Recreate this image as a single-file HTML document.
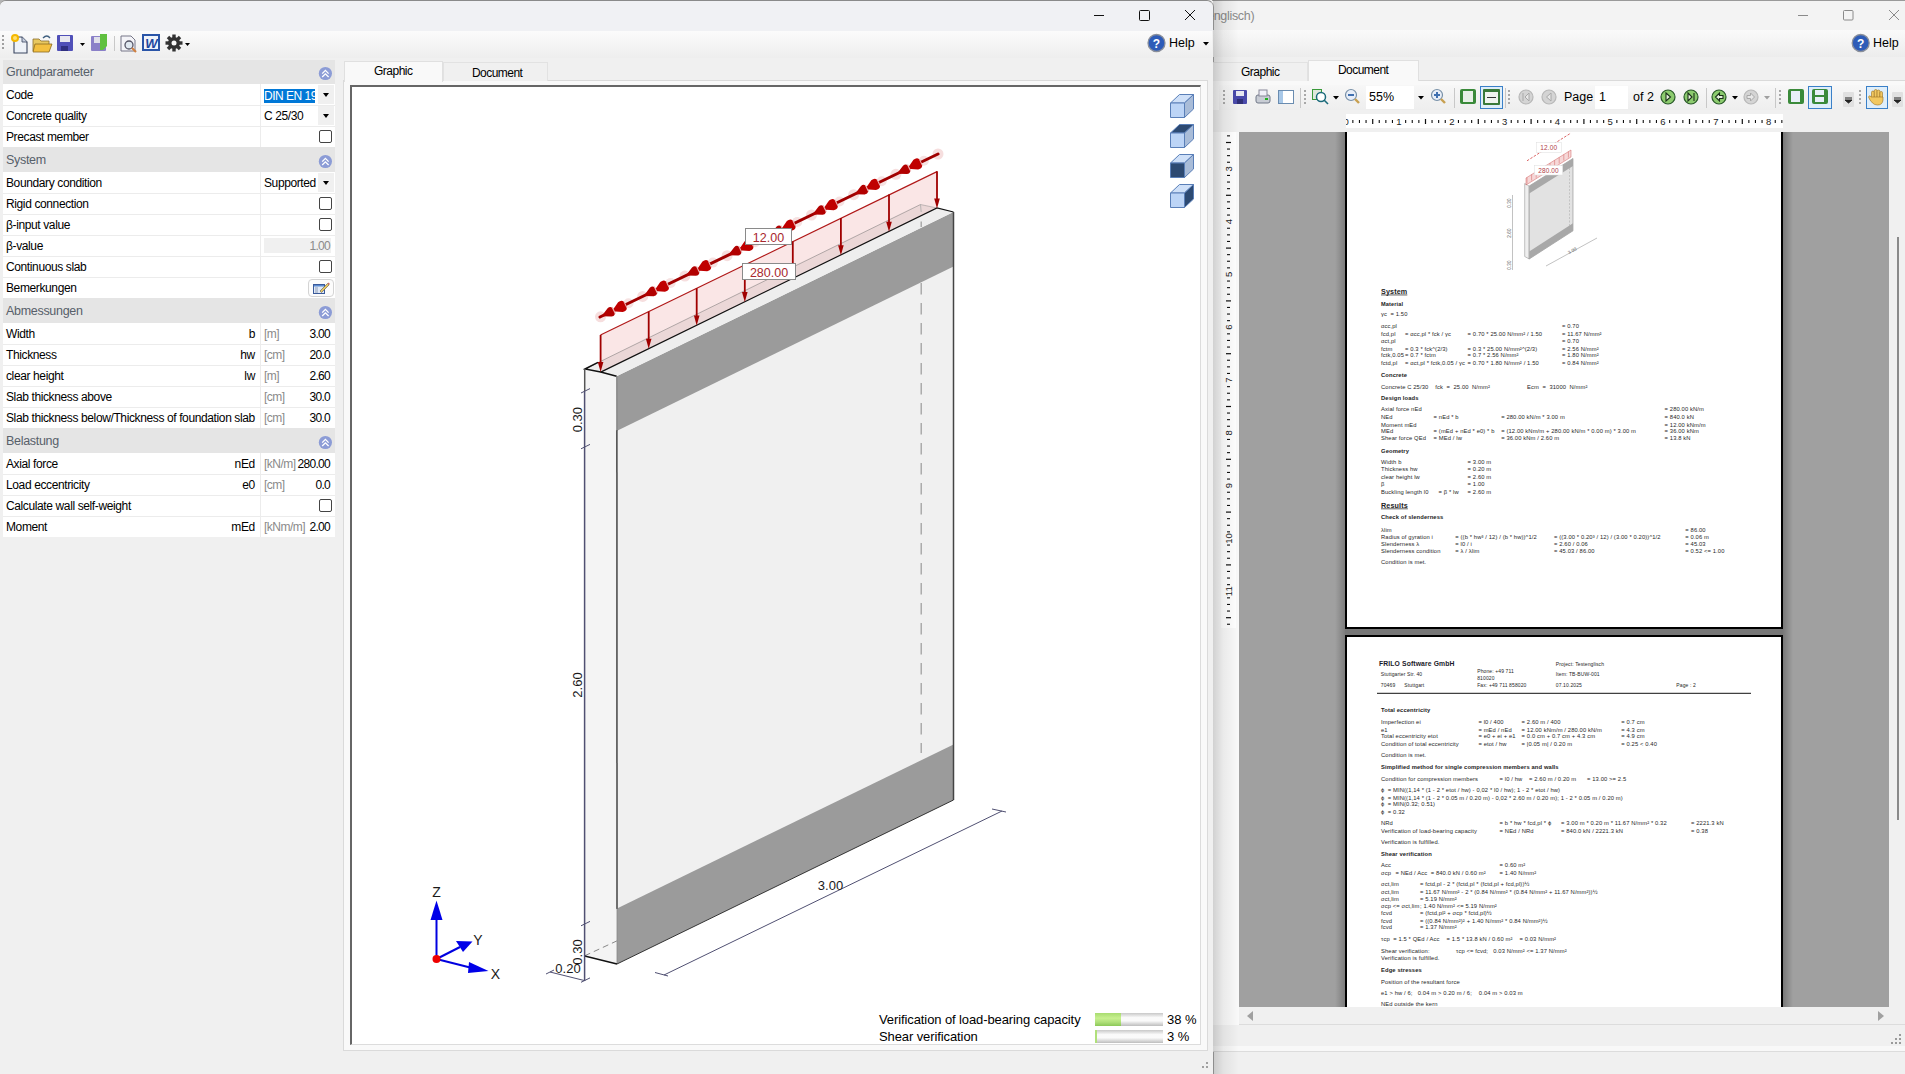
<!DOCTYPE html><html><head><meta charset="utf-8"><style>
*{margin:0;padding:0;box-sizing:border-box}
html,body{width:1905px;height:1074px;overflow:hidden;background:#f0f0f0;font-family:"Liberation Sans",sans-serif;font-size:12px;color:#000}
.a{position:absolute}
.t{position:absolute;white-space:nowrap;line-height:1}
.hdr{position:absolute;left:3px;width:332px;height:25px;background:#e5e5e5;}
.hdr span{position:absolute;left:3px;top:7px;font-size:12.5px;color:#57606a;line-height:1;letter-spacing:-0.3px}
.row{position:absolute;left:3px;width:332px;height:21px;background:#fff}
.row:before{content:"";position:absolute;left:0;top:0;width:332px;height:1px;background:#ececec}
.row.f:before{display:none}
.row .l{position:absolute;left:3px;top:5px;line-height:1;white-space:nowrap;letter-spacing:-0.38px}
.row .s{position:absolute;right:80px;top:5px;line-height:1;letter-spacing:-0.3px}
.row .sep{position:absolute;left:257px;top:0;width:1px;height:21px;background:#ececec}
.row .u{position:absolute;left:261px;top:5px;color:#8a8a8a;line-height:1;white-space:nowrap;letter-spacing:-0.5px}
.row .v{position:absolute;right:5px;top:5px;line-height:1;letter-spacing:-0.7px}
.cb{position:absolute;left:316px;top:4px;width:13px;height:13px;border:1px solid #444;border-radius:2px;background:#fff}
.dd{position:absolute;left:315px;top:1px;width:16px;height:19px;background:#f0f0f0}
.dd:after{content:"";position:absolute;left:5px;top:8px;border-left:3px solid transparent;border-right:3px solid transparent;border-top:4px solid #000}
</style></head><body>
<div class="a" style="left:1212px;top:0;width:693px;height:1074px;background:#f0f0f0;border-top:1px solid #9a9a9a"></div>
<div class="a" style="left:0;top:0;width:10px;height:10px;background:#b4b4b4"></div>
<div class="a" style="left:1212px;top:1px;width:693px;height:29px;background:#f3f3f3"></div>
<div class="a" style="left:0;top:0;width:1214px;height:1074px;background:#f0f0f0;border-top:1px solid #8a8a8a;border-right:1px solid #a8a8a8;border-top-right-radius:7px;border-top-left-radius:6px;overflow:hidden">
<div class="a" style="left:0;top:0;width:1213px;height:30px;background:#f0f1f4;border-top-left-radius:6px;border-top-right-radius:7px"></div>
<div class="a" style="left:0;top:30px;width:1212px;height:27px;background:linear-gradient(#fbfbfb,#f3f3f3 60%,#eeeeee)"></div>
</div>
<div class="hdr" style="top:60px;height:24px"><span style="top:6px">Grundparameter</span><svg class="a" style="left:315px;top:6px" width="15" height="15" viewBox="0 0 15 15"><circle cx="7.4" cy="7.5" r="6.6" fill="#8c9cd6"/><path d="M4.2 7.6 L7.4 4.4 L10.6 7.6 M4.2 11 L7.4 7.8 L10.6 11" stroke="#fff" stroke-width="1.3" fill="none"/></svg></div>
<div class="row f" style="top:84px"><span class="l">Code</span><div class="sep"></div><div class="a" style="left:261px;top:5px;width:51px;height:14px;background:#0078d7;overflow:hidden"><span class="t" style="left:0;top:1px;color:#fff;letter-spacing:-0.5px">DIN EN 19</span></div><div class="dd"></div></div>
<div class="row" style="top:105px"><span class="l">Concrete quality</span><div class="sep"></div><span class="t" style="left:261px;top:5px;letter-spacing:-0.4px">C 25/30</span><div class="dd"></div></div>
<div class="row" style="top:126px"><span class="l">Precast member</span><div class="sep"></div><div class="cb"></div></div>
<div class="hdr" style="top:147px"><span style="top:7px">System</span><svg class="a" style="left:315px;top:7px" width="15" height="15" viewBox="0 0 15 15"><circle cx="7.4" cy="7.5" r="6.6" fill="#8c9cd6"/><path d="M4.2 7.6 L7.4 4.4 L10.6 7.6 M4.2 11 L7.4 7.8 L10.6 11" stroke="#fff" stroke-width="1.3" fill="none"/></svg></div>
<div class="row f" style="top:172px"><span class="l">Boundary condition</span><div class="sep"></div><span class="t" style="left:261px;top:5px;letter-spacing:-0.4px">Supported</span><div class="dd"></div></div>
<div class="row" style="top:193px"><span class="l">Rigid connection</span><div class="sep"></div><div class="cb"></div></div>
<div class="row" style="top:214px"><span class="l">β-input value</span><div class="sep"></div><div class="cb"></div></div>
<div class="row" style="top:235px"><span class="l">β-value</span><div class="sep"></div><div class="a" style="left:261px;top:3px;width:67px;height:15px;background:#f0f0f0"></div><span class="v" style="color:#8a8a8a">1.00</span></div>
<div class="row" style="top:256px"><span class="l">Continuous slab</span><div class="sep"></div><div class="cb"></div></div>
<div class="row" style="top:277px"><span class="l">Bemerkungen</span><div class="sep"></div><div class="a" style="left:305px;top:2px;width:26px;height:18px;border:1px solid #d4d4d4;border-radius:4px;background:#fcfcfc"></div><svg class="a" style="left:310px;top:4px" width="18" height="14" viewBox="0 0 18 14"><rect x="0.5" y="3.5" width="11" height="9" fill="#dfe8f6" stroke="#3a5a9a"/><rect x="1" y="4" width="10" height="1.5" fill="#5a8ad0"/><path d="M2 7h3M2 9h3M2 11h3" stroke="#7a8aa8" stroke-width=".8"/><path d="M7 10 L14.5 2.5 L16 4 L8.5 11.5 Z" fill="#e8c860" stroke="#555" stroke-width=".6"/><path d="M14.5 2.5 L15.5 1.5 L17 3 L16 4Z" fill="#d07060"/></svg></div>
<div class="hdr" style="top:298px"><span style="top:7px">Abmessungen</span><svg class="a" style="left:315px;top:7px" width="15" height="15" viewBox="0 0 15 15"><circle cx="7.4" cy="7.5" r="6.6" fill="#8c9cd6"/><path d="M4.2 7.6 L7.4 4.4 L10.6 7.6 M4.2 11 L7.4 7.8 L10.6 11" stroke="#fff" stroke-width="1.3" fill="none"/></svg></div>
<div class="row f" style="top:323px"><span class="l">Width</span><div class="sep"></div><span class="s">b</span><span class="u">[m]</span><span class="v">3.00</span></div>
<div class="row" style="top:344px"><span class="l">Thickness</span><div class="sep"></div><span class="s">hw</span><span class="u">[cm]</span><span class="v">20.0</span></div>
<div class="row" style="top:365px"><span class="l">clear height</span><div class="sep"></div><span class="s">lw</span><span class="u">[m]</span><span class="v">2.60</span></div>
<div class="row" style="top:386px"><span class="l">Slab thickness above</span><div class="sep"></div><span class="u">[cm]</span><span class="v">30.0</span></div>
<div class="row" style="top:407px"><span class="l">Slab thickness below/Thickness of foundation slab</span><div class="sep"></div><span class="u">[cm]</span><span class="v">30.0</span></div>
<div class="hdr" style="top:428px"><span style="top:7px">Belastung</span><svg class="a" style="left:315px;top:7px" width="15" height="15" viewBox="0 0 15 15"><circle cx="7.4" cy="7.5" r="6.6" fill="#8c9cd6"/><path d="M4.2 7.6 L7.4 4.4 L10.6 7.6 M4.2 11 L7.4 7.8 L10.6 11" stroke="#fff" stroke-width="1.3" fill="none"/></svg></div>
<div class="row f" style="top:453px"><span class="l">Axial force</span><div class="sep"></div><span class="s">nEd</span><span class="u">[kN/m]</span><span class="v">280.00</span></div>
<div class="row" style="top:474px"><span class="l">Load eccentricity</span><div class="sep"></div><span class="s">e0</span><span class="u">[cm]</span><span class="v">0.0</span></div>
<div class="row" style="top:495px"><span class="l">Calculate wall self-weight</span><div class="sep"></div><div class="cb"></div></div>
<div class="row" style="top:516px"><span class="l">Moment</span><div class="sep"></div><span class="s">mEd</span><span class="u">[kNm/m]</span><span class="v">2.00</span></div>
<svg class="a" style="left:0;top:0" width="1213" height="60">
<g stroke="#111" stroke-width="1" fill="none">
 <line x1="1094" y1="15.5" x2="1104" y2="15.5"/>
 <rect x="1139.5" y="10.5" width="10" height="10" rx="1"/>
 <path d="M1185 10 L1195 20 M1195 10 L1185 20"/>
</g>
<!-- grip -->
<g fill="#a0a0a0"><rect x="2" y="35" width="2" height="2"/><rect x="2" y="39" width="2" height="2"/><rect x="2" y="43" width="2" height="2"/><rect x="2" y="47" width="2" height="2"/></g>
<!-- new doc -->
<path d="M14 37 h8 l5 5 v11 h-13 z" fill="#eef2f8" stroke="#3a4660" stroke-width="1.1"/><path d="M22 37 v5 h5" fill="#c8d0e0" stroke="#3a4660" stroke-width=".8"/>
<circle cx="15" cy="38" r="4" fill="#f5b800"/><circle cx="15" cy="38" r="2" fill="#ffe070"/>
<!-- open folder -->
<path d="M33 39 h6 l2 2 h8 v10 h-16 z" fill="#e8c860" stroke="#8a7030" stroke-width=".8"/>
<path d="M35 44 h17 l-3 8 h-16 z" fill="#f3c040" stroke="#8a6a20" stroke-width=".8"/>
<path d="M43 38 q4 -4 7 0" stroke="#406080" stroke-width="1.3" fill="none"/>
<!-- save -->
<rect x="57" y="35" width="16" height="16" fill="#5050b8" rx="1"/><rect x="60" y="36" width="10" height="6" fill="#e8e8f0"/><rect x="61" y="46" width="7" height="5" fill="#303080"/>
<path d="M80 43 h5 l-2.5 3 z" fill="#000"/>
<!-- save green -->
<rect x="91" y="36" width="15" height="15" fill="#8a80c8" rx="1"/><rect x="94" y="37" width="7" height="6" fill="#e0e0ea"/>
<path d="M100 34 h7 v12 l-4 4 h-3 z" fill="#60c040"/>
<line x1="114.5" y1="36" x2="114.5" y2="51" stroke="#c8c8c8"/>
<!-- print preview -->
<path d="M121 36 h10 l4 4 v11 h-14 z" fill="#f4f4f8" stroke="#778" stroke-width="1"/>
<circle cx="129" cy="45" r="4" fill="#e0e8f0" stroke="#556" stroke-width="1.3"/><line x1="132" y1="48" x2="136" y2="52" stroke="#d08040" stroke-width="2.2"/>
<!-- word -->
<rect x="142" y="34" width="18" height="17" fill="#2a55a8"/><rect x="144" y="36" width="14" height="13" fill="#f0f4fa"/>
<text x="151" y="48" font-family="Liberation Sans" font-weight="bold" font-style="italic" font-size="13" fill="#1e48a0" text-anchor="middle" letter-spacing="-1">W</text>
<!-- gear -->
<g transform="translate(174,43)"><circle r="6" fill="#333"/><g fill="#333"><rect x="-1.7" y="-8.5" width="3.4" height="17"/><rect x="-1.7" y="-8.5" width="3.4" height="17" transform="rotate(45)"/><rect x="-1.7" y="-8.5" width="3.4" height="17" transform="rotate(90)"/><rect x="-1.7" y="-8.5" width="3.4" height="17" transform="rotate(135)"/></g><circle r="2.5" fill="#fafafa"/></g>
<path d="M185 43 h5 l-2.5 3 z" fill="#000"/>
<!-- help -->
<circle cx="1156.5" cy="43" r="8.5" fill="#2e5cb8" stroke="#8a8f9a" stroke-width="1.3"/>
<text x="1156.5" y="47.5" font-family="Liberation Sans" font-weight="bold" font-size="12" fill="#fff" text-anchor="middle">?</text>
<path d="M1203 42 h6 l-3 3.5 z" fill="#000"/>
</svg>
<span class="t" style="left:1169px;top:37px;font-size:12.5px">Help</span>
<div class="a" style="left:343px;top:80px;width:865px;height:971px;background:#f9f9f9;border:1px solid #dadada"></div>
<div class="a" style="left:344px;top:61px;width:99px;height:21px;background:#f9f9f9;border:1px solid #e0e0e0;border-bottom:none"></div>
<span class="t" style="left:374px;top:65px;letter-spacing:-0.5px">Graphic</span>
<div class="a" style="left:443px;top:62px;width:105px;height:19px;background:#f0f0f0;border:1px solid #e2e2e2;border-bottom:none"></div>
<span class="t" style="left:472px;top:67px;letter-spacing:-0.55px">Document</span>
<div class="a" style="left:350px;top:85px;width:851px;height:960px;background:#fff;border-top:2px solid #666;border-left:2px solid #666;border-right:1px solid #dcdcdc;border-bottom:1px solid #dcdcdc"></div>
<svg class="a" style="left:0;top:0" width="1213" height="1074">
<polygon points="585,369 616.6,376.3 617,964 584.7,956" fill="#f4f4f4"/>
<polygon points="616.6,376.3 953.5,212 953.5,800 617,964" fill="#f0f0f0"/>
<polygon points="616.6,376.3 953.5,212 953.5,266.5 616.6,431" fill="#9b9b9b"/>
<polygon points="617,908.5 953.5,744.5 953.5,800 617,964" fill="#9b9b9b"/>
<polygon points="585,369 920.5,204.5 953.5,212 616.6,376.3" fill="#eeeeee"/>
<line x1="921.2" y1="221.5" x2="921.2" y2="227" stroke="#a0a0a0" stroke-width="1.3"/>
<line x1="921.2" y1="283" x2="921.2" y2="753" stroke="#a0a0a0" stroke-width="1.3" stroke-dasharray="11.5 8.5"/>
<line x1="584.7" y1="955.8" x2="616.9" y2="940.9" stroke="#888" stroke-width="1" stroke-dasharray="6 4"/>
<polygon points="600.5,335 937,171.6 937,208 600.7,372.1" fill="rgba(215,60,60,0.13)"/>
<line x1="600.5" y1="335" x2="937" y2="171.6" stroke="#b01818" stroke-width="1.2"/>
<line x1="585" y1="369" x2="920.5" y2="204.5" stroke="#6a6a6a" stroke-width="0.8" opacity="0.6"/>
<line x1="920.5" y1="204.5" x2="937" y2="208" stroke="#888" stroke-width="0.8" opacity="0.6"/>
<line x1="920.5" y1="204.5" x2="921.2" y2="212" stroke="#aaa" stroke-width="0.8"/>
<polyline points="598,362.3 585,369 600.7,372.1 616.6,376.3" fill="none" stroke="#111" stroke-width="1.5"/>
<polyline points="600.7,372.1 937,208 953.5,212" fill="none" stroke="#111" stroke-width="1.2"/>
<line x1="616.9" y1="430" x2="617" y2="909" stroke="#444" stroke-width="1.5"/>
<line x1="616.8" y1="376.3" x2="616.9" y2="431" stroke="#777" stroke-width="1"/>
<line x1="617" y1="908" x2="617" y2="964" stroke="#888" stroke-width="0.8"/>
<line x1="953.5" y1="212" x2="953.5" y2="800" stroke="#444" stroke-width="1.5"/>
<polyline points="584.7,956 617,964" fill="none" stroke="#111" stroke-width="1.3"/>
<line x1="617" y1="964" x2="953.5" y2="800" stroke="#222" stroke-width="0.9"/>
<line x1="584.7" y1="369" x2="584.7" y2="391" stroke="#555" stroke-width="1.5"/>
<line x1="600.6" y1="335.0" x2="600.6" y2="366.1" stroke="#a00000" stroke-width="1.8"/>
<polygon points="597.8,362.1 603.4,362.1 600.6,372.1" fill="#a00000"/>
<line x1="648.7" y1="311.6" x2="648.7" y2="342.8" stroke="#a00000" stroke-width="1.8"/>
<polygon points="645.9,338.8 651.5,338.8 648.7,348.8" fill="#a00000"/>
<line x1="696.7" y1="288.2" x2="696.7" y2="319.4" stroke="#a00000" stroke-width="1.8"/>
<polygon points="693.9,315.4 699.5,315.4 696.7,325.4" fill="#a00000"/>
<line x1="744.8" y1="264.8" x2="744.8" y2="296.0" stroke="#a00000" stroke-width="1.8"/>
<polygon points="742.0,292.0 747.6,292.0 744.8,302.0" fill="#a00000"/>
<line x1="792.8" y1="241.4" x2="792.8" y2="272.6" stroke="#a00000" stroke-width="1.8"/>
<polygon points="790.0,268.6 795.6,268.6 792.8,278.6" fill="#a00000"/>
<line x1="840.9" y1="218.0" x2="840.9" y2="249.2" stroke="#a00000" stroke-width="1.8"/>
<polygon points="838.1,245.2 843.7,245.2 840.9,255.2" fill="#a00000"/>
<line x1="889.0" y1="194.6" x2="889.0" y2="225.8" stroke="#a00000" stroke-width="1.8"/>
<polygon points="886.2,221.8 891.8,221.8 889.0,231.8" fill="#a00000"/>
<line x1="937.0" y1="171.2" x2="937.0" y2="202.4" stroke="#a00000" stroke-width="1.8"/>
<polygon points="934.2,198.4 939.8,198.4 937.0,208.4" fill="#a00000"/>
<circle cx="600.5" cy="316.8" r="5.5" fill="#f6dede"/>
<circle cx="628.5" cy="303.3" r="5" fill="#f6e2e2"/>
<circle cx="642.7" cy="296.4" r="5.5" fill="#f6dede"/>
<circle cx="670.7" cy="282.9" r="5" fill="#f6e2e2"/>
<circle cx="684.9" cy="276.1" r="5.5" fill="#f6dede"/>
<circle cx="712.9" cy="262.6" r="5" fill="#f6e2e2"/>
<circle cx="727.1" cy="255.7" r="5.5" fill="#f6dede"/>
<circle cx="755.1" cy="242.2" r="5" fill="#f6e2e2"/>
<circle cx="769.3" cy="235.4" r="5.5" fill="#f6dede"/>
<circle cx="797.3" cy="221.9" r="5" fill="#f6e2e2"/>
<circle cx="811.5" cy="215.0" r="5.5" fill="#f6dede"/>
<circle cx="839.5" cy="201.5" r="5" fill="#f6e2e2"/>
<circle cx="853.7" cy="194.7" r="5.5" fill="#f6dede"/>
<circle cx="881.7" cy="181.2" r="5" fill="#f6e2e2"/>
<circle cx="895.9" cy="174.3" r="5.5" fill="#f6dede"/>
<circle cx="923.9" cy="160.8" r="5" fill="#f6e2e2"/>
<circle cx="938" cy="154" r="5.5" fill="#f6dede"/>
<line x1="600" y1="317" x2="938" y2="154" stroke="#a00000" stroke-width="3" stroke-linecap="round"/>
<g transform="translate(601.5,316.3) rotate(-25.75)"><path d="M0,0 L9,-4.6 C12,-5.6 14,-4 14,0 C14,4 12,5.6 9,4.6 Z" fill="#b20000"/><path d="M11.5,0 L21,-5.4 C25,-6.4 27,-4.5 27,0 C27,4.5 25,6.4 21,5.4 Z" fill="#c00000"/><line x1="13.6" y1="-3.8" x2="13.6" y2="3.8" stroke="#f0b8b8" stroke-width="1.1"/><line x1="26.6" y1="-3.2" x2="26.6" y2="3.2" stroke="#f0b8b8" stroke-width="1"/></g>
<g transform="translate(643.7,295.9) rotate(-25.75)"><path d="M0,0 L9,-4.6 C12,-5.6 14,-4 14,0 C14,4 12,5.6 9,4.6 Z" fill="#b20000"/><path d="M11.5,0 L21,-5.4 C25,-6.4 27,-4.5 27,0 C27,4.5 25,6.4 21,5.4 Z" fill="#c00000"/><line x1="13.6" y1="-3.8" x2="13.6" y2="3.8" stroke="#f0b8b8" stroke-width="1.1"/><line x1="26.6" y1="-3.2" x2="26.6" y2="3.2" stroke="#f0b8b8" stroke-width="1"/></g>
<g transform="translate(685.9,275.6) rotate(-25.75)"><path d="M0,0 L9,-4.6 C12,-5.6 14,-4 14,0 C14,4 12,5.6 9,4.6 Z" fill="#b20000"/><path d="M11.5,0 L21,-5.4 C25,-6.4 27,-4.5 27,0 C27,4.5 25,6.4 21,5.4 Z" fill="#c00000"/><line x1="13.6" y1="-3.8" x2="13.6" y2="3.8" stroke="#f0b8b8" stroke-width="1.1"/><line x1="26.6" y1="-3.2" x2="26.6" y2="3.2" stroke="#f0b8b8" stroke-width="1"/></g>
<g transform="translate(728.1,255.2) rotate(-25.75)"><path d="M0,0 L9,-4.6 C12,-5.6 14,-4 14,0 C14,4 12,5.6 9,4.6 Z" fill="#b20000"/><path d="M11.5,0 L21,-5.4 C25,-6.4 27,-4.5 27,0 C27,4.5 25,6.4 21,5.4 Z" fill="#c00000"/><line x1="13.6" y1="-3.8" x2="13.6" y2="3.8" stroke="#f0b8b8" stroke-width="1.1"/><line x1="26.6" y1="-3.2" x2="26.6" y2="3.2" stroke="#f0b8b8" stroke-width="1"/></g>
<g transform="translate(770.3,234.9) rotate(-25.75)"><path d="M0,0 L9,-4.6 C12,-5.6 14,-4 14,0 C14,4 12,5.6 9,4.6 Z" fill="#b20000"/><path d="M11.5,0 L21,-5.4 C25,-6.4 27,-4.5 27,0 C27,4.5 25,6.4 21,5.4 Z" fill="#c00000"/><line x1="13.6" y1="-3.8" x2="13.6" y2="3.8" stroke="#f0b8b8" stroke-width="1.1"/><line x1="26.6" y1="-3.2" x2="26.6" y2="3.2" stroke="#f0b8b8" stroke-width="1"/></g>
<g transform="translate(812.5,214.5) rotate(-25.75)"><path d="M0,0 L9,-4.6 C12,-5.6 14,-4 14,0 C14,4 12,5.6 9,4.6 Z" fill="#b20000"/><path d="M11.5,0 L21,-5.4 C25,-6.4 27,-4.5 27,0 C27,4.5 25,6.4 21,5.4 Z" fill="#c00000"/><line x1="13.6" y1="-3.8" x2="13.6" y2="3.8" stroke="#f0b8b8" stroke-width="1.1"/><line x1="26.6" y1="-3.2" x2="26.6" y2="3.2" stroke="#f0b8b8" stroke-width="1"/></g>
<g transform="translate(854.7,194.2) rotate(-25.75)"><path d="M0,0 L9,-4.6 C12,-5.6 14,-4 14,0 C14,4 12,5.6 9,4.6 Z" fill="#b20000"/><path d="M11.5,0 L21,-5.4 C25,-6.4 27,-4.5 27,0 C27,4.5 25,6.4 21,5.4 Z" fill="#c00000"/><line x1="13.6" y1="-3.8" x2="13.6" y2="3.8" stroke="#f0b8b8" stroke-width="1.1"/><line x1="26.6" y1="-3.2" x2="26.6" y2="3.2" stroke="#f0b8b8" stroke-width="1"/></g>
<g transform="translate(896.9,173.8) rotate(-25.75)"><path d="M0,0 L9,-4.6 C12,-5.6 14,-4 14,0 C14,4 12,5.6 9,4.6 Z" fill="#b20000"/><path d="M11.5,0 L21,-5.4 C25,-6.4 27,-4.5 27,0 C27,4.5 25,6.4 21,5.4 Z" fill="#c00000"/><line x1="13.6" y1="-3.8" x2="13.6" y2="3.8" stroke="#f0b8b8" stroke-width="1.1"/><line x1="26.6" y1="-3.2" x2="26.6" y2="3.2" stroke="#f0b8b8" stroke-width="1"/></g>
<rect x="745.5" y="228.5" width="46" height="16" fill="#fff" stroke="#8a8a8a" stroke-width="1"/>
<text x="768.5" y="241.5" font-family="Liberation Sans" font-size="12.5" fill="#a8282e" text-anchor="middle">12.00</text>
<rect x="742.5" y="263.5" width="53" height="16" fill="#fff" stroke="#8a8a8a" stroke-width="1"/>
<text x="769" y="276.5" font-family="Liberation Sans" font-size="12.5" fill="#a8282e" text-anchor="middle">280.00</text>
<line x1="584.6" y1="391" x2="584.6" y2="981" stroke="#505072" stroke-width="1.5"/>
<line x1="581" y1="393.0" x2="590" y2="388.6" stroke="#505072" stroke-width="1"/>
<line x1="581" y1="448.8" x2="590" y2="444.4" stroke="#505072" stroke-width="1"/>
<line x1="581" y1="925.8" x2="590" y2="921.4" stroke="#505072" stroke-width="1"/>
<line x1="581" y1="982.3" x2="590" y2="977.9" stroke="#505072" stroke-width="1"/>
<line x1="550" y1="972" x2="584.6" y2="980.6" stroke="#505072" stroke-width="1"/>
<line x1="546" y1="974" x2="554" y2="970" stroke="#505072" stroke-width="1"/>
<line x1="664" y1="975" x2="1002" y2="811" stroke="#505072" stroke-width="1"/>
<line x1="655" y1="972.5" x2="668" y2="976" stroke="#505072" stroke-width="1"/>
<line x1="992" y1="809" x2="1006" y2="812" stroke="#505072" stroke-width="1"/>
<text transform="translate(577.3,419.6) rotate(-90)" font-family="Liberation Sans" font-size="13" fill="#1a1a1a" text-anchor="middle" dominant-baseline="central">0.30</text>
<text transform="translate(577.3,685) rotate(-90)" font-family="Liberation Sans" font-size="13" fill="#1a1a1a" text-anchor="middle" dominant-baseline="central">2.60</text>
<text transform="translate(577.3,952) rotate(-90)" font-family="Liberation Sans" font-size="13" fill="#1a1a1a" text-anchor="middle" dominant-baseline="central">0.30</text>
<text x="568" y="973" font-family="Liberation Sans" font-size="13" fill="#1a1a1a" text-anchor="middle">0.20</text>
<text x="830.5" y="890" font-family="Liberation Sans" font-size="13" fill="#1a1a1a" text-anchor="middle">3.00</text>
<line x1="436.5" y1="959" x2="436.5" y2="915" stroke="#0000e0" stroke-width="2"/>
<polygon points="436.5,900.5 430.5,920 442.5,920" fill="#0000e8"/>
<line x1="436.5" y1="959" x2="460" y2="947" stroke="#0000e0" stroke-width="2"/>
<polygon points="472.5,941.5 456,941 463,952" fill="#0000e8"/>
<line x1="436.5" y1="959" x2="472" y2="968" stroke="#0000e0" stroke-width="2"/>
<polygon points="488.5,971 469,962 468,973" fill="#0000e8"/>
<circle cx="436.5" cy="959" r="4" fill="#ee0000"/>
<text x="436.5" y="897" font-family="Liberation Sans" font-size="14" fill="#1a1a1a" text-anchor="middle">Z</text>
<text x="478" y="944.5" font-family="Liberation Sans" font-size="14" fill="#1a1a1a" text-anchor="middle">Y</text>
<text x="495.5" y="978.5" font-family="Liberation Sans" font-size="14" fill="#1a1a1a" text-anchor="middle">X</text>
<g transform="translate(1170,94)" stroke="#5a7fb8" stroke-width="1" stroke-linejoin="round"><polygon points="0.5,9 9.5,0.5 23.5,0.5 14.5,9" fill="#cfe0f8"/><polygon points="14.5,9 23.5,0.5 23.5,15 14.5,23.5" fill="#a9bcd8"/><rect x="0.5" y="9" width="14" height="14.5" fill="#bcd4f6"/></g>
<g transform="translate(1170,124)" stroke="#5a7fb8" stroke-width="1" stroke-linejoin="round"><polygon points="0.5,9 9.5,0.5 23.5,0.5 14.5,9" fill="#2d4a72"/><polygon points="14.5,9 23.5,0.5 23.5,15 14.5,23.5" fill="#a9bcd8"/><rect x="0.5" y="9" width="14" height="14.5" fill="#bcd4f6"/></g>
<g transform="translate(1170,154)" stroke="#5a7fb8" stroke-width="1" stroke-linejoin="round"><polygon points="0.5,9 9.5,0.5 23.5,0.5 14.5,9" fill="#cfe0f8"/><polygon points="14.5,9 23.5,0.5 23.5,15 14.5,23.5" fill="#a9bcd8"/><rect x="0.5" y="9" width="14" height="14.5" fill="#2d4a72"/></g>
<g transform="translate(1170,184)" stroke="#5a7fb8" stroke-width="1" stroke-linejoin="round"><polygon points="0.5,9 9.5,0.5 23.5,0.5 14.5,9" fill="#cfe0f8"/><polygon points="14.5,9 23.5,0.5 23.5,15 14.5,23.5" fill="#2d4a72"/><rect x="0.5" y="9" width="14" height="14.5" fill="#bcd4f6"/></g>
</svg>
<span class="t" style="left:879px;top:1013px;font-size:13px;letter-spacing:-0.1px">Verification of load-bearing capacity</span>
<span class="t" style="left:879px;top:1030px;font-size:13px;letter-spacing:-0.1px">Shear verification</span>
<div class="a" style="left:1095px;top:1013px;width:68px;height:13px;background:linear-gradient(#c8c8c8,#fafafa 35%,#fafafa 60%,#bdbdbd)"></div>
<div class="a" style="left:1095px;top:1013px;width:26px;height:13px;background:linear-gradient(#a8dc70,#c8f090 40%,#b0e07a 70%,#8cc858)"></div>
<div class="a" style="left:1095px;top:1030px;width:68px;height:13px;background:linear-gradient(#c8c8c8,#fafafa 35%,#fafafa 60%,#bdbdbd)"></div>
<div class="a" style="left:1095px;top:1030px;width:2px;height:13px;background:#b0e07a"></div>
<span class="t" style="left:1167px;top:1013px;font-size:13px">38 %</span>
<span class="t" style="left:1167px;top:1030px;font-size:13px">3 %</span>
<svg class="a" style="left:1200px;top:1062px" width="12" height="12"><g fill="#a0a0a0"><rect x="6" y="0" width="2" height="2"/><rect x="2" y="4" width="2" height="2"/><rect x="6" y="4" width="2" height="2"/></g></svg>
<div class="a" style="left:1213px;top:5px;width:60px;height:22px;overflow:hidden"><span class="t" style="left:-6px;top:5px;font-size:12.5px;color:#8a8a8a;letter-spacing:-0.3px">englisch)</span></div>
<svg class="a" style="left:1212px;top:0" width="693" height="1074">
<g stroke="#8a8a8a" stroke-width="1" fill="none">
 <line x1="586" y1="15.5" x2="596" y2="15.5"/>
 <rect x="631.5" y="10.5" width="9.5" height="9.5" rx="1"/>
 <path d="M677 10 L687 20 M687 10 L677 20"/>
</g>
</svg>
<div class="a" style="left:1213px;top:30px;width:692px;height:27px;background:linear-gradient(#fafafa,#f2f2f2 60%,#ececec)"></div>
<svg class="a" style="left:1845px;top:33px" width="28" height="20"><circle cx="15.7" cy="10" r="8.5" fill="#2e5cb8" stroke="#8a8f9a" stroke-width="1.3"/>
<text x="15.7" y="14.5" font-family="Liberation Sans" font-weight="bold" font-size="12" fill="#fff" text-anchor="middle">?</text></svg>
<span class="t" style="left:1873px;top:37px;font-size:12.5px">Help</span>
<div class="a" style="left:1213px;top:80px;width:692px;height:971px;background:#f9f9f9;border-top:1px solid #dadada;border-bottom:1px solid #dadada"></div>
<div class="a" style="left:1213px;top:62px;width:95px;height:19px;background:#f0f0f0;border:1px solid #e2e2e2;border-left:none;border-bottom:none"></div>
<span class="t" style="left:1241px;top:66px;letter-spacing:-0.5px">Graphic</span>
<div class="a" style="left:1308px;top:60px;width:111px;height:21px;background:#f9f9f9;border:1px solid #e0e0e0;border-bottom:none"></div>
<span class="t" style="left:1338px;top:64px;letter-spacing:-0.55px">Document</span>
<div class="a" style="left:1219px;top:85px;width:686px;height:25px;background:linear-gradient(#f7f7f7,#eeeeee)"></div>
<div class="a" style="left:1213px;top:110px;width:692px;height:22px;background:#f0f0f0"></div>
<svg class="a" style="left:1212px;top:80px" width="693" height="40">
<rect x="11" y="10" width="2" height="2" fill="#a8a8a8"/><rect x="11" y="14" width="2" height="2" fill="#a8a8a8"/><rect x="11" y="18" width="2" height="2" fill="#a8a8a8"/><rect x="11" y="22" width="2" height="2" fill="#a8a8a8"/>
<rect x="21" y="10" width="14" height="14" fill="#4a4aaa" rx="1"/><rect x="24" y="11" width="8" height="5" fill="#e8e8f0"/><rect x="25" y="19" width="6" height="5" fill="#303078"/>
<rect x="44" y="15" width="14" height="8" rx="2" fill="#c8ccd4" stroke="#707888"/><rect x="47" y="10" width="8" height="6" fill="#f0f0f8" stroke="#889"/><rect x="53" y="18" width="3" height="2" fill="#20b020"/>
<rect x="66.5" y="10.5" width="15" height="13" fill="#fff" stroke="#6a8cb0"/><rect x="67" y="11" width="4" height="12" fill="#a8c8e8"/>
<line x1="88.5" y1="8" x2="88.5" y2="28" stroke="#c8c8c8"/>
<rect x="92" y="10" width="2" height="2" fill="#a8a8a8"/><rect x="92" y="14" width="2" height="2" fill="#a8a8a8"/><rect x="92" y="18" width="2" height="2" fill="#a8a8a8"/><rect x="92" y="22" width="2" height="2" fill="#a8a8a8"/>
<rect x="100.5" y="9.5" width="9" height="10" fill="#dfe8dc" stroke="#3a9a3a"/><circle cx="109" cy="17" r="4.5" fill="#fff" stroke="#1a6a7a" stroke-width="1.5"/><line x1="112" y1="20" x2="116" y2="24" stroke="#1a6a7a" stroke-width="1.6"/>
<path d="M121 16 h6 l-3 3.5 z" fill="#000"/>
<circle cx="139" cy="15" r="5.5" fill="#e8eef8" stroke="#7890a8" stroke-width="1.2"/><rect x="136" y="14" width="6" height="2" fill="#4070b0"/><line x1="143" y1="19" x2="147" y2="23" stroke="#c8a050" stroke-width="2.4"/>
<rect x="154" y="6" width="48" height="23" fill="#fff"/>
<path d="M206 16 h6 l-3 3.5 z" fill="#000"/>
<circle cx="225" cy="15" r="5.5" fill="#e8eef8" stroke="#7890a8" stroke-width="1.2"/><rect x="222" y="14" width="6" height="2" fill="#4070b0"/><rect x="224" y="12" width="2" height="6" fill="#4070b0"/><line x1="229" y1="19" x2="233" y2="23" stroke="#c8a050" stroke-width="2.4"/>
<line x1="242.5" y1="8" x2="242.5" y2="28" stroke="#c8c8c8"/>
<rect x="248" y="9" width="16" height="15" rx="2" fill="#3a8a3a"/><rect x="251" y="11" width="10" height="11" fill="#e8f0e8"/>
<rect x="268.5" y="6.5" width="22" height="22" fill="#dfeefa" stroke="#3a80c8"/><rect x="271" y="9" width="17" height="16" rx="1" fill="#3a7a3a"/><rect x="273" y="12" width="13" height="11" fill="#f0f4f0"/><line x1="275" y1="17.5" x2="284" y2="17.5" stroke="#333"/>
<line x1="293.5" y1="8" x2="293.5" y2="28" stroke="#c8c8c8"/>
<rect x="296" y="10" width="2" height="2" fill="#a8a8a8"/><rect x="296" y="14" width="2" height="2" fill="#a8a8a8"/><rect x="296" y="18" width="2" height="2" fill="#a8a8a8"/><rect x="296" y="22" width="2" height="2" fill="#a8a8a8"/>
<circle cx="314" cy="17" r="7" fill="#d4d4d4" stroke="#b8b8b8" stroke-width="1.2"/><path d="M317 13 l-4 4 l4 4 z M311 13 v8" stroke="#a8a8a8" stroke-width="1" fill="#e8e8e8"/>
<circle cx="337" cy="17" r="7" fill="#d4d4d4" stroke="#b8b8b8" stroke-width="1.2"/><path d="M339 13 l-4.5 4 l4.5 4 z" stroke="#a8a8a8" stroke-width="1" fill="#e8e8e8"/>
<rect x="383" y="6" width="33" height="23" fill="#fff"/>
<circle cx="456" cy="17" r="7" fill="#8ccb6e" stroke="#2a5a2a" stroke-width="1.2"/><path d="M454 13 l4.5 4 l-4.5 4 z" fill="#e8f4e0" stroke="#1a301a" stroke-width="1.1"/>
<circle cx="479" cy="17" r="7" fill="#8ccb6e" stroke="#2a5a2a" stroke-width="1.2"/><path d="M476 13 l4 4 l-4 4 z M482 13 v8" stroke="#1a301a" stroke-width="1.1" fill="#e8f4e0"/>
<line x1="494.5" y1="8" x2="494.5" y2="28" stroke="#c8c8c8"/>
<circle cx="507" cy="17" r="7" fill="#8ccb6e" stroke="#2a5a2a" stroke-width="1.2"/><path d="M511 15.5 h-3.5 v-2.5 l-4 4 l4 4 v-2.5 h3.5 z" stroke="#1a301a" stroke-width="1.1" fill="#e8f4e0"/>
<path d="M520 16 h6 l-3 3.5 z" fill="#000"/>
<circle cx="539" cy="17" r="7" fill="#d4d4d4" stroke="#b8b8b8" stroke-width="1.2"/><path d="M535 15.5 h3.5 v-2.5 l4 4 l-4 4 v-2.5 h-3.5 z" stroke="#a8a8a8" stroke-width="1" fill="#e8e8e8"/>
<path d="M552 16 h6 l-3 3.5 z" fill="#a0a0a0"/>
<line x1="563.5" y1="8" x2="563.5" y2="28" stroke="#c8c8c8"/>
<rect x="567" y="10" width="2" height="2" fill="#a8a8a8"/><rect x="567" y="14" width="2" height="2" fill="#a8a8a8"/><rect x="567" y="18" width="2" height="2" fill="#a8a8a8"/><rect x="567" y="22" width="2" height="2" fill="#a8a8a8"/>
<rect x="576" y="9" width="16" height="15" rx="2" fill="#3a8a3a"/><rect x="579" y="11" width="9" height="11" fill="#e8f0f8"/>
<rect x="596.5" y="6.5" width="23" height="22" fill="#dfeefa" stroke="#3a80c8"/><rect x="600" y="9" width="16" height="15" rx="2" fill="#3a8a3a"/><rect x="603" y="10" width="9" height="5" fill="#e8f0f8"/><rect x="603" y="17" width="9" height="5" fill="#e8f0f8"/>
<rect x="631" y="12" width="11" height="15" fill="#e0e0e0" rx="1"/><path d="M633 18 h7 M633 20 h7 l-3.5 3 z" stroke="#222" fill="#222"/>
<rect x="647" y="10" width="2" height="2" fill="#a8a8a8"/><rect x="647" y="14" width="2" height="2" fill="#a8a8a8"/><rect x="647" y="18" width="2" height="2" fill="#a8a8a8"/><rect x="647" y="22" width="2" height="2" fill="#a8a8a8"/>
<rect x="654.5" y="6.5" width="21" height="22" fill="#dfeefa" stroke="#3a80c8"/><g transform="translate(656,8)" fill="#f2c860" stroke="#9a7020" stroke-width=".6"><rect x="3.5" y="3" width="2.8" height="9" rx="1.4"/><rect x="6.3" y="1.5" width="2.8" height="10" rx="1.4"/><rect x="9.1" y="2" width="2.8" height="10" rx="1.4"/><rect x="11.9" y="3.5" width="2.6" height="9" rx="1.3"/><path d="M3.5 9 q-2.5 -2.5 -3 0 q1 3 4 6 q2 2 5 2 q5 0 5.5 -5 v-3 h-11.5 z"/></g>
<rect x="680" y="12" width="11" height="15" fill="#e0e0e0" rx="1"/><path d="M682 18 h7 M682 20 h7 l-3.5 3 z" stroke="#222" fill="#222"/>
</svg>
<span class="t" style="left:1369px;top:91px;font-size:12.5px">55%</span>
<span class="t" style="left:1564px;top:91px;font-size:12.5px">Page</span>
<span class="t" style="left:1599px;top:91px;font-size:12.5px">1</span>
<span class="t" style="left:1633px;top:91px;font-size:12.5px">of 2</span>
<div class="a" style="left:1239px;top:132px;width:650px;height:875px;background:#a0a0a0"></div>
<div class="a" style="left:1335px;top:132px;width:10px;height:875px;background:linear-gradient(90deg,rgba(0,0,0,0),rgba(0,0,0,0.22))"></div>
<div class="a" style="left:1783px;top:132px;width:10px;height:875px;background:linear-gradient(90deg,rgba(0,0,0,0.25),rgba(0,0,0,0))"></div>
<div class="a" style="left:1345px;top:628px;width:438px;height:8px;background:#777"></div>
<div class="a" style="left:1345px;top:132px;width:438px;height:497px;background:#fff;border:2px solid #000;border-top:none"></div>
<div class="a" style="left:1345px;top:635px;width:438px;height:372px;background:#fff;border:2px solid #000;border-bottom:none"></div>
<svg class="a" style="left:1346px;top:114px" width="437" height="14"><rect width="437" height="14" fill="#fff"/>
<text x="0.2" y="10.5" font-family="Liberation Sans" font-size="9.5" text-anchor="middle" fill="#222">0</text>
<rect x="6.3" y="6" width="1.1" height="3" fill="#111"/>
<rect x="12.9" y="6" width="1.1" height="3" fill="#111"/>
<rect x="19.5" y="6" width="1.1" height="3" fill="#111"/>
<rect x="26.1" y="5" width="1.2" height="5" fill="#111"/>
<rect x="32.7" y="6" width="1.1" height="3" fill="#111"/>
<rect x="39.3" y="6" width="1.1" height="3" fill="#111"/>
<rect x="45.9" y="6" width="1.1" height="3" fill="#111"/>
<text x="53.0" y="10.5" font-family="Liberation Sans" font-size="9.5" text-anchor="middle" fill="#222">1</text>
<rect x="59.1" y="6" width="1.1" height="3" fill="#111"/>
<rect x="65.7" y="6" width="1.1" height="3" fill="#111"/>
<rect x="72.3" y="6" width="1.1" height="3" fill="#111"/>
<rect x="78.9" y="5" width="1.2" height="5" fill="#111"/>
<rect x="85.5" y="6" width="1.1" height="3" fill="#111"/>
<rect x="92.1" y="6" width="1.1" height="3" fill="#111"/>
<rect x="98.7" y="6" width="1.1" height="3" fill="#111"/>
<text x="105.8" y="10.5" font-family="Liberation Sans" font-size="9.5" text-anchor="middle" fill="#222">2</text>
<rect x="111.9" y="6" width="1.1" height="3" fill="#111"/>
<rect x="118.5" y="6" width="1.1" height="3" fill="#111"/>
<rect x="125.1" y="6" width="1.1" height="3" fill="#111"/>
<rect x="131.7" y="5" width="1.2" height="5" fill="#111"/>
<rect x="138.3" y="6" width="1.1" height="3" fill="#111"/>
<rect x="144.9" y="6" width="1.1" height="3" fill="#111"/>
<rect x="151.5" y="6" width="1.1" height="3" fill="#111"/>
<text x="158.6" y="10.5" font-family="Liberation Sans" font-size="9.5" text-anchor="middle" fill="#222">3</text>
<rect x="164.7" y="6" width="1.1" height="3" fill="#111"/>
<rect x="171.3" y="6" width="1.1" height="3" fill="#111"/>
<rect x="177.9" y="6" width="1.1" height="3" fill="#111"/>
<rect x="184.5" y="5" width="1.2" height="5" fill="#111"/>
<rect x="191.1" y="6" width="1.1" height="3" fill="#111"/>
<rect x="197.7" y="6" width="1.1" height="3" fill="#111"/>
<rect x="204.3" y="6" width="1.1" height="3" fill="#111"/>
<text x="211.4" y="10.5" font-family="Liberation Sans" font-size="9.5" text-anchor="middle" fill="#222">4</text>
<rect x="217.5" y="6" width="1.1" height="3" fill="#111"/>
<rect x="224.1" y="6" width="1.1" height="3" fill="#111"/>
<rect x="230.7" y="6" width="1.1" height="3" fill="#111"/>
<rect x="237.3" y="5" width="1.2" height="5" fill="#111"/>
<rect x="243.9" y="6" width="1.1" height="3" fill="#111"/>
<rect x="250.5" y="6" width="1.1" height="3" fill="#111"/>
<rect x="257.1" y="6" width="1.1" height="3" fill="#111"/>
<text x="264.2" y="10.5" font-family="Liberation Sans" font-size="9.5" text-anchor="middle" fill="#222">5</text>
<rect x="270.3" y="6" width="1.1" height="3" fill="#111"/>
<rect x="276.9" y="6" width="1.1" height="3" fill="#111"/>
<rect x="283.5" y="6" width="1.1" height="3" fill="#111"/>
<rect x="290.1" y="5" width="1.2" height="5" fill="#111"/>
<rect x="296.7" y="6" width="1.1" height="3" fill="#111"/>
<rect x="303.3" y="6" width="1.1" height="3" fill="#111"/>
<rect x="309.9" y="6" width="1.1" height="3" fill="#111"/>
<text x="317.0" y="10.5" font-family="Liberation Sans" font-size="9.5" text-anchor="middle" fill="#222">6</text>
<rect x="323.1" y="6" width="1.1" height="3" fill="#111"/>
<rect x="329.7" y="6" width="1.1" height="3" fill="#111"/>
<rect x="336.3" y="6" width="1.1" height="3" fill="#111"/>
<rect x="342.9" y="5" width="1.2" height="5" fill="#111"/>
<rect x="349.5" y="6" width="1.1" height="3" fill="#111"/>
<rect x="356.1" y="6" width="1.1" height="3" fill="#111"/>
<rect x="362.7" y="6" width="1.1" height="3" fill="#111"/>
<text x="369.8" y="10.5" font-family="Liberation Sans" font-size="9.5" text-anchor="middle" fill="#222">7</text>
<rect x="375.9" y="6" width="1.1" height="3" fill="#111"/>
<rect x="382.5" y="6" width="1.1" height="3" fill="#111"/>
<rect x="389.1" y="6" width="1.1" height="3" fill="#111"/>
<rect x="395.7" y="5" width="1.2" height="5" fill="#111"/>
<rect x="402.3" y="6" width="1.1" height="3" fill="#111"/>
<rect x="408.9" y="6" width="1.1" height="3" fill="#111"/>
<rect x="415.5" y="6" width="1.1" height="3" fill="#111"/>
<text x="422.6" y="10.5" font-family="Liberation Sans" font-size="9.5" text-anchor="middle" fill="#222">8</text>
<rect x="428.7" y="6" width="1.1" height="3" fill="#111"/>
<rect x="435.3" y="6" width="1.1" height="3" fill="#111"/>
</svg>
<svg class="a" style="left:1221px;top:132px" width="15" height="496"><rect width="15" height="496" fill="#fff"/>
<rect x="6" y="3.3" width="3" height="1.1" fill="#111"/>
<rect x="5" y="9.9" width="5" height="1.2" fill="#111"/>
<rect x="6" y="16.5" width="3" height="1.1" fill="#111"/>
<rect x="6" y="23.1" width="3" height="1.1" fill="#111"/>
<rect x="6" y="29.7" width="3" height="1.1" fill="#111"/>
<text transform="translate(10.5,36.8) rotate(-90)" font-family="Liberation Sans" font-size="9.5" text-anchor="middle" fill="#222">3</text>
<rect x="6" y="42.9" width="3" height="1.1" fill="#111"/>
<rect x="6" y="49.5" width="3" height="1.1" fill="#111"/>
<rect x="6" y="56.1" width="3" height="1.1" fill="#111"/>
<rect x="5" y="62.7" width="5" height="1.2" fill="#111"/>
<rect x="6" y="69.3" width="3" height="1.1" fill="#111"/>
<rect x="6" y="75.9" width="3" height="1.1" fill="#111"/>
<rect x="6" y="82.5" width="3" height="1.1" fill="#111"/>
<text transform="translate(10.5,89.6) rotate(-90)" font-family="Liberation Sans" font-size="9.5" text-anchor="middle" fill="#222">4</text>
<rect x="6" y="95.7" width="3" height="1.1" fill="#111"/>
<rect x="6" y="102.3" width="3" height="1.1" fill="#111"/>
<rect x="6" y="108.9" width="3" height="1.1" fill="#111"/>
<rect x="5" y="115.5" width="5" height="1.2" fill="#111"/>
<rect x="6" y="122.1" width="3" height="1.1" fill="#111"/>
<rect x="6" y="128.7" width="3" height="1.1" fill="#111"/>
<rect x="6" y="135.3" width="3" height="1.1" fill="#111"/>
<text transform="translate(10.5,142.4) rotate(-90)" font-family="Liberation Sans" font-size="9.5" text-anchor="middle" fill="#222">5</text>
<rect x="6" y="148.5" width="3" height="1.1" fill="#111"/>
<rect x="6" y="155.1" width="3" height="1.1" fill="#111"/>
<rect x="6" y="161.7" width="3" height="1.1" fill="#111"/>
<rect x="5" y="168.3" width="5" height="1.2" fill="#111"/>
<rect x="6" y="174.9" width="3" height="1.1" fill="#111"/>
<rect x="6" y="181.5" width="3" height="1.1" fill="#111"/>
<rect x="6" y="188.1" width="3" height="1.1" fill="#111"/>
<text transform="translate(10.5,195.2) rotate(-90)" font-family="Liberation Sans" font-size="9.5" text-anchor="middle" fill="#222">6</text>
<rect x="6" y="201.3" width="3" height="1.1" fill="#111"/>
<rect x="6" y="207.9" width="3" height="1.1" fill="#111"/>
<rect x="6" y="214.5" width="3" height="1.1" fill="#111"/>
<rect x="5" y="221.1" width="5" height="1.2" fill="#111"/>
<rect x="6" y="227.7" width="3" height="1.1" fill="#111"/>
<rect x="6" y="234.3" width="3" height="1.1" fill="#111"/>
<rect x="6" y="240.9" width="3" height="1.1" fill="#111"/>
<text transform="translate(10.5,248.0) rotate(-90)" font-family="Liberation Sans" font-size="9.5" text-anchor="middle" fill="#222">7</text>
<rect x="6" y="254.1" width="3" height="1.1" fill="#111"/>
<rect x="6" y="260.7" width="3" height="1.1" fill="#111"/>
<rect x="6" y="267.3" width="3" height="1.1" fill="#111"/>
<rect x="5" y="273.9" width="5" height="1.2" fill="#111"/>
<rect x="6" y="280.5" width="3" height="1.1" fill="#111"/>
<rect x="6" y="287.1" width="3" height="1.1" fill="#111"/>
<rect x="6" y="293.7" width="3" height="1.1" fill="#111"/>
<text transform="translate(10.5,300.8) rotate(-90)" font-family="Liberation Sans" font-size="9.5" text-anchor="middle" fill="#222">8</text>
<rect x="6" y="306.9" width="3" height="1.1" fill="#111"/>
<rect x="6" y="313.5" width="3" height="1.1" fill="#111"/>
<rect x="6" y="320.1" width="3" height="1.1" fill="#111"/>
<rect x="5" y="326.7" width="5" height="1.2" fill="#111"/>
<rect x="6" y="333.3" width="3" height="1.1" fill="#111"/>
<rect x="6" y="339.9" width="3" height="1.1" fill="#111"/>
<rect x="6" y="346.5" width="3" height="1.1" fill="#111"/>
<text transform="translate(10.5,353.6) rotate(-90)" font-family="Liberation Sans" font-size="9.5" text-anchor="middle" fill="#222">9</text>
<rect x="6" y="359.7" width="3" height="1.1" fill="#111"/>
<rect x="6" y="366.3" width="3" height="1.1" fill="#111"/>
<rect x="6" y="372.9" width="3" height="1.1" fill="#111"/>
<rect x="5" y="379.5" width="5" height="1.2" fill="#111"/>
<rect x="6" y="386.1" width="3" height="1.1" fill="#111"/>
<rect x="6" y="392.7" width="3" height="1.1" fill="#111"/>
<rect x="6" y="399.3" width="3" height="1.1" fill="#111"/>
<text transform="translate(10.5,406.4) rotate(-90)" font-family="Liberation Sans" font-size="9.5" text-anchor="middle" fill="#222">10</text>
<rect x="6" y="412.5" width="3" height="1.1" fill="#111"/>
<rect x="6" y="419.1" width="3" height="1.1" fill="#111"/>
<rect x="6" y="425.7" width="3" height="1.1" fill="#111"/>
<rect x="5" y="432.3" width="5" height="1.2" fill="#111"/>
<rect x="6" y="438.9" width="3" height="1.1" fill="#111"/>
<rect x="6" y="445.5" width="3" height="1.1" fill="#111"/>
<rect x="6" y="452.1" width="3" height="1.1" fill="#111"/>
<text transform="translate(10.5,459.2) rotate(-90)" font-family="Liberation Sans" font-size="9.5" text-anchor="middle" fill="#222">11</text>
<rect x="6" y="465.3" width="3" height="1.1" fill="#111"/>
<rect x="6" y="471.9" width="3" height="1.1" fill="#111"/>
<rect x="6" y="478.5" width="3" height="1.1" fill="#111"/>
<rect x="5" y="485.1" width="5" height="1.2" fill="#111"/>
<rect x="6" y="491.7" width="3" height="1.1" fill="#111"/>
</svg>
<div class="a" style="left:1239px;top:1007px;width:666px;height:18px;background:#f0f0f0;border-bottom:1px solid #dcdcdc"></div>
<svg class="a" style="left:1240px;top:1008px" width="660" height="16"><path d="M7 8 l6 -5 v10 z" fill="#a0a0a0"/><path d="M638 3 l6 5 l-6 5 z" fill="#a0a0a0"/></svg>
<div class="a" style="left:1889px;top:132px;width:16px;height:875px;background:#f0f0f0"></div>
<div class="a" style="left:1897px;top:237px;width:2px;height:583px;background:#8a8a8a"></div>
<div class="a" style="left:1213px;top:1025px;width:692px;height:26px;background:#f0f0f0"></div>
<svg class="a" style="left:1890px;top:1033px" width="12" height="12"><g fill="#9a9a9a"><rect x="9" y="1" width="2" height="2"/><rect x="5" y="5" width="2" height="2"/><rect x="9" y="5" width="2" height="2"/><rect x="1" y="9" width="2" height="2"/><rect x="5" y="9" width="2" height="2"/><rect x="9" y="9" width="2" height="2"/></g></svg>
<div class="a" style="left:1213px;top:1046px;width:692px;height:6px;background:#f8f8f8;border-bottom:1px solid #dcdcdc"></div>
<div class="a" style="left:1213px;top:0;width:26px;height:1074px;background:linear-gradient(90deg,rgba(0,0,0,0.16),rgba(0,0,0,0.06) 40%,rgba(0,0,0,0))"></div>
<svg class="a" style="left:1348px;top:132px;white-space:pre" width="433" height="875" font-family="Liberation Sans" letter-spacing="0.12">
<g transform="translate(-1348,-132)">
<polygon points="1524.7,183.5 1529.2,186 1529.2,259 1524.7,256.5" fill="#efefef" stroke="#888" stroke-width=".5"/>
<polygon points="1529.2,186 1573,158.5 1573,230.8 1529.2,259" fill="#e2e2e2" stroke="#777" stroke-width=".5"/>
<polygon points="1529.2,186 1573,158.5 1573,166 1529.2,193.5" fill="#a8a8a8"/>
<polygon points="1529.2,251.5 1573,223.3 1573,230.8 1529.2,259" fill="#a8a8a8"/>
<line x1="1569.5" y1="168" x2="1569.5" y2="226" stroke="#b0b0b0" stroke-width=".6" stroke-dasharray="2 1.5"/>
<polygon points="1526,178 1571,150 1571,157 1526,185" fill="rgba(220,100,100,0.25)" stroke="#d06060" stroke-width=".5"/>
<line x1="1527.0" y1="177.4" x2="1527.0" y2="183.4" stroke="#d06060" stroke-width=".5"/>
<line x1="1531.6" y1="174.5" x2="1531.6" y2="180.5" stroke="#d06060" stroke-width=".5"/>
<line x1="1536.2" y1="171.7" x2="1536.2" y2="177.7" stroke="#d06060" stroke-width=".5"/>
<line x1="1540.8" y1="168.8" x2="1540.8" y2="174.8" stroke="#d06060" stroke-width=".5"/>
<line x1="1545.4" y1="165.9" x2="1545.4" y2="171.9" stroke="#d06060" stroke-width=".5"/>
<line x1="1550.0" y1="163.1" x2="1550.0" y2="169.1" stroke="#d06060" stroke-width=".5"/>
<line x1="1554.6" y1="160.2" x2="1554.6" y2="166.2" stroke="#d06060" stroke-width=".5"/>
<line x1="1559.2" y1="157.3" x2="1559.2" y2="163.3" stroke="#d06060" stroke-width=".5"/>
<line x1="1563.8" y1="154.5" x2="1563.8" y2="160.5" stroke="#d06060" stroke-width=".5"/>
<line x1="1568.4" y1="151.6" x2="1568.4" y2="157.6" stroke="#d06060" stroke-width=".5"/>
<line x1="1527" y1="160.8" x2="1571" y2="133" stroke="#d04040" stroke-width=".8" stroke-dasharray="2.5 1.5"/>
<rect x="1536.3" y="142.6" width="25" height="9.7" fill="#fff" stroke="#ddd" stroke-width=".5"/>
<text x="1548.8" y="150" font-size="6.5" fill="#b04048" text-anchor="middle">12.00</text>
<rect x="1534.4" y="165.5" width="28.3" height="9.5" fill="#fff" stroke="#ddd" stroke-width=".5"/>
<text x="1548.5" y="173" font-size="6.5" fill="#b04048" text-anchor="middle">280.00</text>
<line x1="1512.5" y1="195" x2="1512.5" y2="270" stroke="#999" stroke-width=".6"/>
<line x1="1546" y1="266" x2="1597" y2="238" stroke="#999" stroke-width=".6"/>
<text transform="translate(1511,203) rotate(-90)" font-size="4.5" fill="#555" text-anchor="middle">0.30</text>
<text transform="translate(1511,233) rotate(-90)" font-size="4.5" fill="#555" text-anchor="middle">2.60</text>
<text transform="translate(1511,265) rotate(-90)" font-size="4.5" fill="#555" text-anchor="middle">0.30</text>
<text transform="translate(1573,252) rotate(-30)" font-size="4.5" fill="#555" text-anchor="middle">3.00</text>
</g>
<text x="33.0" y="161.6" font-size="7.2" font-weight="bold" text-decoration="underline" fill="#222">System</text>
<text x="33.0" y="173.5" font-size="5.6" font-weight="bold" fill="#222">Material</text>
<text x="33.0" y="184.4" font-size="5.8" fill="#262626">γc  = 1.50</text>
<text x="33.0" y="196.3" font-size="5.8" fill="#262626">αcc,pl</text><text x="214.0" y="196.3" font-size="5.8" fill="#262626">= 0.70</text>
<text x="33.0" y="203.7" font-size="5.8" fill="#262626">fcd,pl</text><text x="57.0" y="203.7" font-size="5.8" fill="#262626">= αcc,pl * fck / γc</text><text x="119.6" y="203.7" font-size="5.8" fill="#262626">= 0.70 * 25.00 N/mm² / 1.50</text><text x="214.0" y="203.7" font-size="5.8" fill="#262626">= 11.67 N/mm²</text>
<text x="33.0" y="211.1" font-size="5.8" fill="#262626">αct,pl</text><text x="214.0" y="211.1" font-size="5.8" fill="#262626">= 0.70</text>
<text x="33.0" y="218.5" font-size="5.8" fill="#262626">fctm</text><text x="57.0" y="218.5" font-size="5.8" fill="#262626">= 0.3 * fck^(2/3)</text><text x="119.6" y="218.5" font-size="5.8" fill="#262626">= 0.3 * 25.00 N/mm²^(2/3)</text><text x="214.0" y="218.5" font-size="5.8" fill="#262626">= 2.56 N/mm²</text>
<text x="33.0" y="225.4" font-size="5.8" fill="#262626">fctk,0.05</text><text x="57.0" y="225.4" font-size="5.8" fill="#262626">= 0.7 * fctm</text><text x="119.6" y="225.4" font-size="5.8" fill="#262626">= 0.7 * 2.56 N/mm²</text><text x="214.0" y="225.4" font-size="5.8" fill="#262626">= 1.80 N/mm²</text>
<text x="33.0" y="233.3" font-size="5.8" fill="#262626">fctd,pl</text><text x="57.0" y="233.3" font-size="5.8" fill="#262626">= αct,pl * fctk,0.05 / γc</text><text x="119.6" y="233.3" font-size="5.8" fill="#262626">= 0.70 * 1.80 N/mm² / 1.50</text><text x="214.0" y="233.3" font-size="5.8" fill="#262626">= 0.84 N/mm²</text>
<text x="33.0" y="244.7" font-size="5.8" font-weight="bold" fill="#222">Concrete</text>
<text x="33.0" y="256.5" font-size="5.8" fill="#262626">Concrete C 25/30    fck  =  25.00  N/mm²</text>
<text x="179.0" y="256.5" font-size="5.8" fill="#262626">Ecm  =  31000  N/mm²</text>
<text x="33.0" y="267.9" font-size="5.8" font-weight="bold" fill="#222">Design loads</text>
<text x="33.0" y="279.1" font-size="5.8" fill="#262626">Axial force nEd</text><text x="316.6" y="279.1" font-size="5.8" fill="#262626">= 280.00 kN/m</text>
<text x="33.0" y="286.6" font-size="5.8" fill="#262626">NEd</text><text x="85.6" y="286.6" font-size="5.8" fill="#262626">= nEd * b</text><text x="153.2" y="286.6" font-size="5.8" fill="#262626">= 280.00 kN/m * 3.00 m</text><text x="316.6" y="286.6" font-size="5.8" fill="#262626">= 840.0 kN</text>
<text x="33.0" y="294.5" font-size="5.8" fill="#262626">Moment mEd</text><text x="316.6" y="294.5" font-size="5.8" fill="#262626">= 12.00 kNm/m</text>
<text x="33.0" y="301.4" font-size="5.8" fill="#262626">MEd</text><text x="85.6" y="301.4" font-size="5.8" fill="#262626">= (mEd + nEd * e0) * b</text><text x="153.2" y="301.4" font-size="5.8" fill="#262626">= (12.00 kNm/m + 280.00 kN/m * 0.00 m) * 3.00 m</text><text x="316.6" y="301.4" font-size="5.8" fill="#262626">= 36.00 kNm</text>
<text x="33.0" y="308.3" font-size="5.8" fill="#262626">Shear force QEd</text><text x="85.6" y="308.3" font-size="5.8" fill="#262626">= MEd / lw</text><text x="153.2" y="308.3" font-size="5.8" fill="#262626">= 36.00 kNm / 2.60 m</text><text x="316.6" y="308.3" font-size="5.8" fill="#262626">= 13.8 kN</text>
<text x="33.0" y="320.7" font-size="5.8" font-weight="bold" fill="#222">Geometry</text>
<text x="33.0" y="331.5" font-size="5.8" fill="#262626">Width b</text><text x="119.6" y="331.5" font-size="5.8" fill="#262626">= 3.00 m</text>
<text x="33.0" y="339.4" font-size="5.8" fill="#262626">Thickness hw</text><text x="119.6" y="339.4" font-size="5.8" fill="#262626">= 0.20 m</text>
<text x="33.0" y="346.8" font-size="5.8" fill="#262626">clear height lw</text><text x="119.6" y="346.8" font-size="5.8" fill="#262626">= 2.60 m</text>
<text x="33.0" y="353.7" font-size="5.8" fill="#262626">β</text><text x="119.6" y="353.7" font-size="5.8" fill="#262626">= 1.00</text>
<text x="33.0" y="361.6" font-size="5.8" fill="#262626">Buckling length l0</text><text x="90.5" y="361.6" font-size="5.8" fill="#262626">= β * lw</text><text x="119.6" y="361.6" font-size="5.8" fill="#262626">= 2.60 m</text>
<text x="33.0" y="375.5" font-size="7.2" font-weight="bold" text-decoration="underline" fill="#222">Results</text>
<text x="33.0" y="387.3" font-size="5.8" font-weight="bold" fill="#222">Check of slenderness</text>
<text x="33.0" y="399.6" font-size="5.8" fill="#262626">λlim</text><text x="337.3" y="399.6" font-size="5.8" fill="#262626">= 86.00</text>
<text x="33.0" y="406.6" font-size="5.8" fill="#262626">Radius of gyration i</text><text x="107.3" y="406.6" font-size="5.8" fill="#262626">= ((b * hw³ / 12) / (b * hw))^1/2</text><text x="206.0" y="406.6" font-size="5.8" fill="#262626">= ((3.00 * 0.20³ / 12) / (3.00 * 0.20))^1/2</text><text x="337.3" y="406.6" font-size="5.8" fill="#262626">= 0.06 m</text>
<text x="33.0" y="414.0" font-size="5.8" fill="#262626">Slenderness λ</text><text x="107.3" y="414.0" font-size="5.8" fill="#262626">= l0 / i</text><text x="206.0" y="414.0" font-size="5.8" fill="#262626">= 2.60 / 0.06</text><text x="337.3" y="414.0" font-size="5.8" fill="#262626">= 45.03</text>
<text x="33.0" y="421.4" font-size="5.8" fill="#262626">Slenderness condition</text><text x="107.3" y="421.4" font-size="5.8" fill="#262626">= λ / λlim</text><text x="206.0" y="421.4" font-size="5.8" fill="#262626">= 45.03 / 86.00</text><text x="337.3" y="421.4" font-size="5.8" fill="#262626">= 0.52 &lt;= 1.00</text>
<text x="33.0" y="432.2" font-size="5.8" fill="#262626">Condition is met.</text>
<text x="31.0" y="533.5" font-size="6.8" font-weight="bold" fill="#1a1a2a">FRILO Software GmbH</text>
<text x="207.8" y="534.2" font-size="5" fill="#262626">Project: Testenglisch</text>
<text x="129.2" y="540.5" font-size="5" fill="#262626">Phone: +49 711</text>
<text x="32.8" y="544.3" font-size="5" fill="#262626">Stuttgarter Str. 40</text>
<text x="207.8" y="544.3" font-size="5" fill="#262626">Item: TB-BUW-001</text>
<text x="129.2" y="548.1" font-size="5" fill="#262626">810020</text>
<text x="32.8" y="555.3" font-size="5" fill="#262626">70469      Stuttgart</text>
<text x="129.2" y="555.3" font-size="5" fill="#262626">Fax: +49 711 858020</text>
<text x="207.8" y="555.3" font-size="5" fill="#262626">07.10.2025</text>
<text x="328.3" y="555.3" font-size="5" fill="#262626">Page : 2</text>
<line x1="29" y1="561.3" x2="403" y2="561.3" stroke="#111" stroke-width="1"/>
<text x="33.0" y="579.7" font-size="5.8" font-weight="bold" fill="#222">Total eccentricity</text>
<text x="33.0" y="591.6" font-size="5.8" fill="#262626">Imperfection ei</text><text x="130.4" y="591.6" font-size="5.8" fill="#262626">= l0 / 400</text><text x="173.6" y="591.6" font-size="5.8" fill="#262626">= 2.60 m / 400</text><text x="273.3" y="591.6" font-size="5.8" fill="#262626">= 0.7 cm</text>
<text x="33.0" y="599.6" font-size="5.8" fill="#262626">e1</text><text x="130.4" y="599.6" font-size="5.8" fill="#262626">= mEd / nEd</text><text x="173.6" y="599.6" font-size="5.8" fill="#262626">= 12.00 kNm/m / 280.00 kN/m</text><text x="273.3" y="599.6" font-size="5.8" fill="#262626">= 4.3 cm</text>
<text x="33.0" y="606.4" font-size="5.8" fill="#262626">Total eccentricity etot</text><text x="130.4" y="606.4" font-size="5.8" fill="#262626">= e0 + ei + e1</text><text x="173.6" y="606.4" font-size="5.8" fill="#262626">= 0.0 cm + 0.7 cm + 4.3 cm</text><text x="273.3" y="606.4" font-size="5.8" fill="#262626">= 4.9 cm</text>
<text x="33.0" y="613.5" font-size="5.8" fill="#262626">Condition of total eccentricity</text><text x="130.4" y="613.5" font-size="5.8" fill="#262626">= etot / hw</text><text x="173.6" y="613.5" font-size="5.8" fill="#262626">= |0.05 m| / 0.20 m</text><text x="273.3" y="613.5" font-size="5.8" fill="#262626">= 0.25 &lt; 0.40</text>
<text x="33.0" y="625.4" font-size="5.8" fill="#262626">Condition is met.</text>
<text x="33.0" y="636.8" font-size="5.8" font-weight="bold" fill="#222">Simplified method for single compression members and walls</text>
<text x="33.0" y="648.6" font-size="5.8" fill="#262626">Condition for compression members</text><text x="151.6" y="648.6" font-size="5.8" fill="#262626">= l0 / hw</text><text x="181.0" y="648.6" font-size="5.8" fill="#262626">= 2.60 m / 0.20 m</text><text x="239.0" y="648.6" font-size="5.8" fill="#262626">= 13.00 &gt;= 2.5</text>
<text x="33.0" y="659.6" font-size="5.8" fill="#262626">ϕ  = MIN((1,14 * (1 - 2 * etot / hw) - 0,02 * l0 / hw); 1 - 2 * etot / hw)</text>
<text x="33.0" y="667.7" font-size="5.8" fill="#262626">ϕ  = MIN((1,14 * (1 - 2 * 0.05 m / 0.20 m) - 0,02 * 2.60 m / 0.20 m); 1 - 2 * 0.05 m / 0.20 m)</text>
<text x="33.0" y="674.4" font-size="5.8" fill="#262626">ϕ  = MIN(0.32; 0.51)</text>
<text x="33.0" y="681.6" font-size="5.8" fill="#262626">ϕ  = 0.32</text>
<text x="33.0" y="693.4" font-size="5.8" fill="#262626">NRd</text><text x="151.6" y="693.4" font-size="5.8" fill="#262626">= b * hw * fcd,pl * ϕ</text><text x="213.0" y="693.4" font-size="5.8" fill="#262626">= 3.00 m * 0.20 m * 11.67 N/mm² * 0.32</text><text x="343.0" y="693.4" font-size="5.8" fill="#262626">= 2221.3 kN</text>
<text x="33.0" y="700.6" font-size="5.8" fill="#262626">Verification of load-bearing capacity</text><text x="151.6" y="700.6" font-size="5.8" fill="#262626">= NEd / NRd</text><text x="213.0" y="700.6" font-size="5.8" fill="#262626">= 840.0 kN / 2221.3 kN</text><text x="343.0" y="700.6" font-size="5.8" fill="#262626">= 0.38</text>
<text x="33.0" y="711.6" font-size="5.8" fill="#262626">Verification is fulfilled.</text>
<text x="33.0" y="723.5" font-size="5.8" font-weight="bold" fill="#222">Shear verification</text>
<text x="33.0" y="735.3" font-size="5.8" fill="#262626">Acc</text><text x="151.6" y="735.3" font-size="5.8" fill="#262626">= 0.60 m²</text>
<text x="33.0" y="742.5" font-size="5.8" fill="#262626">σcp</text><text x="47.5" y="742.5" font-size="5.8" fill="#262626">= NEd / Acc</text><text x="82.7" y="742.5" font-size="5.8" fill="#262626">= 840.0 kN / 0.60 m²</text><text x="151.6" y="742.5" font-size="5.8" fill="#262626">= 1.40 N/mm²</text>
<text x="33.0" y="753.9" font-size="5.8" fill="#262626">σct,lim</text><text x="72.0" y="753.9" font-size="5.8" fill="#262626">= fctd,pl - 2 * (fctd,pl * (fctd,pl + fcd,pl))½</text>
<text x="33.0" y="761.5" font-size="5.8" fill="#262626">σct,lim</text><text x="72.0" y="761.5" font-size="5.8" fill="#262626">= 11.67 N/mm² - 2 * (0.84 N/mm² * (0.84 N/mm² + 11.67 N/mm²))½</text>
<text x="33.0" y="768.7" font-size="5.8" fill="#262626">σct,lim</text><text x="72.0" y="768.7" font-size="5.8" fill="#262626">= 5.19 N/mm²</text>
<text x="33.0" y="775.5" font-size="5.8" fill="#262626">σcp &lt;= σct,lim</text><text x="72.0" y="775.5" font-size="5.8" fill="#262626">; 1.40 N/mm² &lt;= 5.19 N/mm²</text>
<text x="33.0" y="783.1" font-size="5.8" fill="#262626">fcvd</text><text x="72.0" y="783.1" font-size="5.8" fill="#262626">= (fctd,pl² + σcp * fctd,pl)½</text>
<text x="33.0" y="790.7" font-size="5.8" fill="#262626">fcvd</text><text x="72.0" y="790.7" font-size="5.8" fill="#262626">= ((0.84 N/mm²)² + 1.40 N/mm² * 0.84 N/mm²)½</text>
<text x="33.0" y="797.4" font-size="5.8" fill="#262626">fcvd</text><text x="72.0" y="797.4" font-size="5.8" fill="#262626">= 1.37 N/mm²</text>
<text x="33.0" y="809.3" font-size="5.8" fill="#262626">τcp  = 1.5 * QEd / Acc    = 1.5 * 13.8 kN / 0.60 m²    = 0.03 N/mm²</text>
<text x="33.0" y="820.7" font-size="5.8" fill="#262626">Shear verification:</text><text x="108.0" y="820.7" font-size="5.8" fill="#262626">τcp &lt;= fcvd;   0.03 N/mm² &lt;= 1.37 N/mm²</text>
<text x="33.0" y="828.3" font-size="5.8" fill="#262626">Verification is fulfilled.</text>
<text x="33.0" y="839.7" font-size="5.8" font-weight="bold" fill="#222">Edge stresses</text>
<text x="33.0" y="851.5" font-size="5.8" fill="#262626">Position of the resultant force</text>
<text x="33.0" y="862.5" font-size="5.8" fill="#262626">e1 &gt; hw / 6;   0.04 m &gt; 0.20 m / 6;    0.04 m &gt; 0.03 m</text>
<text x="33.0" y="874.0" font-size="5.8" fill="#262626">NEd outside the kern</text>
</svg>
</body></html>
